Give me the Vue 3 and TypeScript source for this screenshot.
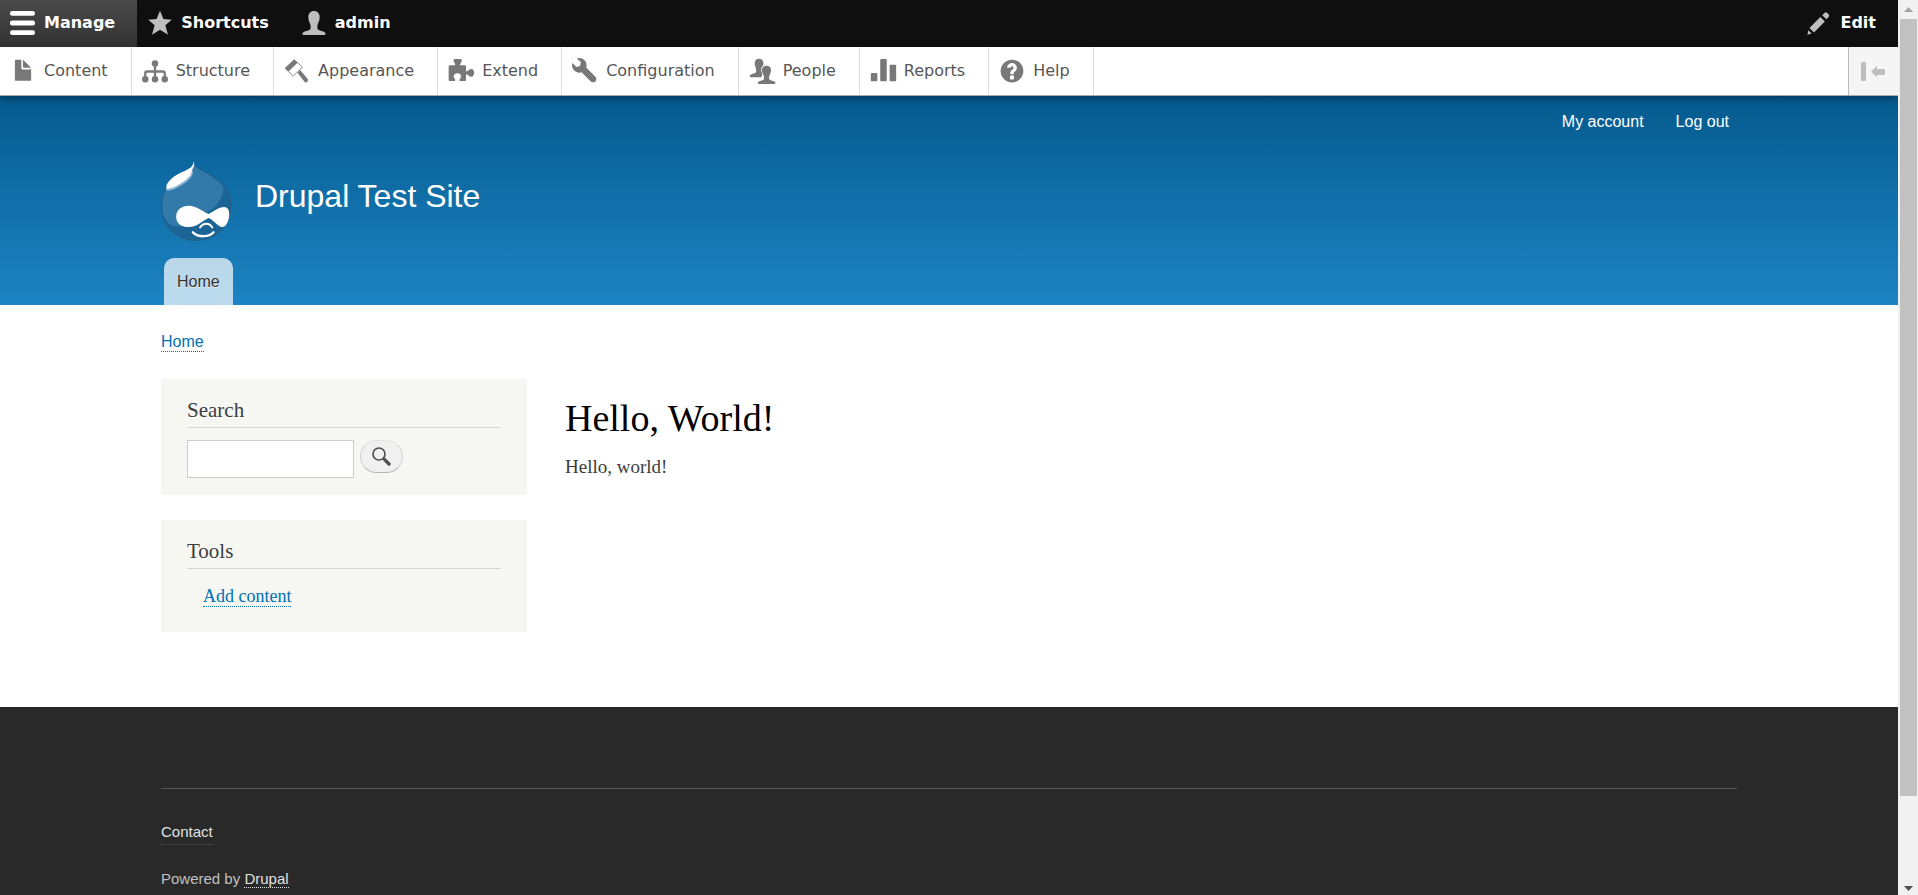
<script setup lang="ts">
import { ref } from 'vue'

interface MenuItem {
  label: string
  icon: string
}

const menu: MenuItem[] = [
  { label: 'Content', icon: 'file' },
  { label: 'Structure', icon: 'chart' },
  { label: 'Appearance', icon: 'brush' },
  { label: 'Extend', icon: 'puzzle' },
  { label: 'Configuration', icon: 'wrench' },
  { label: 'People', icon: 'people' },
  { label: 'Reports', icon: 'bars' },
  { label: 'Help', icon: 'help' },
]

const trayOpen = ref(true)
const query = ref('')
</script>

<template>
  <div class="window">
    <div class="page">
      <nav class="bar" aria-label="Administration toolbar">
        <button type="button" class="tab active" @click="trayOpen = !trayOpen">
          <svg class="icon" viewBox="0 0 16 16" aria-hidden="true">
            <rect y=".6" width="15.4" height="3" rx="1.4" />
            <rect y="6.5" width="15.4" height="3" rx="1.4" />
            <rect y="12.4" width="15.4" height="3" rx="1.4" />
          </svg>
          Manage
        </button>
        <button type="button" class="tab">
          <svg class="icon" viewBox="0 0 16 16" aria-hidden="true">
            <path d="M8 .5 10.1 5.5 15.2 6 11.3 9.4 12.9 15.3 8 12.2 3.1 15.3 4.7 9.4.8 6 5.9 5.5Z" />
          </svg>
          Shortcuts
        </button>
        <button type="button" class="tab">
          <svg class="icon" viewBox="0 0 16 16" aria-hidden="true">
            <path d="M8 .6C10.3.6 11.5 2.2 11.5 4.4 11.5 6.7 10.5 7.8 10.2 9.1 9.9 10.6 10 11.8 10.8 12.3 12.2 13 14.7 12.9 15.1 14.6Q15.1 15.4 14.4 15.4H1.6Q.9 15.4.9 14.6C1.3 12.9 3.8 13 5.2 12.3 6 11.8 6.1 10.6 5.8 9.1 5.5 7.8 4.5 6.7 4.5 4.4 4.5 2.2 5.7.6 8 .6Z" />
          </svg>
          admin
        </button>
        <button type="button" class="tab edit">
          <svg class="icon" viewBox="0 0 16 16" aria-hidden="true">
            <path d="M10 3.2 11.5 1.7Q12.3 1 13.1 1.8L14 2.8Q14.6 3.6 13.9 4.3L12.5 5.7ZM8.8 4.3 11.6 7.1 4.9 13.9 2.1 11.1ZM1.4 12.4 3.5 14.5.9 15.3Z" />
          </svg>
          Edit
        </button>
      </nav>

      <nav v-show="trayOpen" class="tray" aria-label="Administration menu">
        <ul class="menu">
          <li v-for="item in menu" :key="item.label">
            <a href="#">
              <svg class="icon" viewBox="0 0 16 16" aria-hidden="true">
                <path
                  v-if="item.icon === 'file'"
                  d="M12.502 7h-5c-.276 0-.502-.225-.502-.5v-5c0-.275-.225-.5-.5-.5h-3c-.275 0-.5.225-.5.5v12.029c0 .275.225.5.5.5h9c.275 0 .5-.225.5-.5v-6.529c0-.275-.223-.5-.498-.5zM8.502 6h4c.275 0 .34-.159.146-.354l-4.293-4.292c-.195-.195-.353-.129-.353.146v4c0 .275.225.5.5.5z"
                />
                <g v-else-if="item.icon === 'chart'">
                  <circle cx="8" cy="3.4" r="2" />
                  <circle cx="2" cy="13.1" r="2" />
                  <circle cx="8" cy="13.1" r="2" />
                  <circle cx="14" cy="13.1" r="2" />
                  <path class="line" d="M8 3V13M2 13V9.4Q2 8.3 3.1 8.3H12.9Q14 8.3 14 9.4V13" />
                </g>
                <g v-else-if="item.icon === 'brush'">
                  <path d="M6.3.7 8.5 2.8 2.6 8.5.4 6.3Z" />
                  <path class="thin" d="M8.3 2.8 11.3 5.7 5.7 11.1 2.7 8.3" />
                  <path d="M8.3 9 9.9 7.4 14.5 12.7Q15.2 13.7 14.4 14.6 13.5 15.4 12.6 14.6Z" />
                </g>
                <path
                  v-else-if="item.icon === 'puzzle'"
                  d="M.4 5.4Q.4 4.5 1.4 4.5H4.4C4.7 3.4 3.4 2.5 3.4 1.5 3.4.8 4 .6 4.7.6H7.3C8 .6 8.5.8 8.5 1.5 8.5 2.5 7.2 3.4 7.5 4.5H10.3Q11.1 4.5 11.1 5.4V8.2C12.3 8.5 12.7 6.7 14.2 6.7 15.5 6.7 16.1 7.8 16.1 9 16.1 10.2 15.5 11.5 14.2 11.5 12.7 11.5 12.3 9.7 11.1 10V13.5Q11.1 14.2 10.3 14.2H7.1C6.7 13.1 8 12.6 8 11.3 8 10 6.9 9.4 5.8 9.4 4.7 9.4 3.5 10 3.5 11.3 3.5 12.6 4.8 13.1 4.4 14.2H1.3Q.4 14.2.4 13.5Z"
                />
                <path
                  v-else-if="item.icon === 'wrench'"
                  d="M14.416 11.586l-.01-.008v-.001l-5.656-5.656c.15-.449.252-.921.252-1.421 0-2.485-2.016-4.5-4.502-4.5-.505 0-.981.102-1.434.255l2.431 2.431-.588 2.196-2.196.588-2.445-2.445c-.162.464-.268.956-.268 1.475 0 2.486 2.014 4.5 4.5 4.5.5 0 .972-.102 1.421-.251l5.667 5.665c.781.781 2.047.781 2.828 0s.781-2.047 0-2.828z"
                />
                <g v-else-if="item.icon === 'people'">
                  <path d="M6.2.5C7.9.5 8.9 1.7 8.9 3.4 8.9 4 8.8 4.4 8.6 4.8 7.4 5.6 7.2 7.6 8 9.3 8.3 10.4 8.2 11 7.4 11.9H1.1Q.4 11.9.4 11.2C.7 9.9 2.9 9.9 3.8 9.3 4.8 8.5 4.5 7.2 4.2 6.1 3.8 5.2 3.5 4.5 3.5 3.4 3.5 1.7 4.5.5 6.2.5Z" />
                  <path d="M10.8 4.7C12.6 4.7 13.6 5.9 13.6 7.6 13.6 9.1 12.8 10 12.5 11.1 12.2 12.4 12.3 13.2 13 13.6 14 14.2 16 14.1 16.3 15.3Q16.3 16 15.7 16H6Q5.4 16 5.4 15.3C5.8 14.1 7.7 14.2 8.6 13.6 9.3 13.2 9.4 12.4 9.1 11.1 8.8 10 8 9.1 8 7.6 8 5.9 9 4.7 10.8 4.7Z" />
                </g>
                <g v-else-if="item.icon === 'bars'">
                  <rect x=".5" y="9.3" width="4" height="5" rx=".6" />
                  <rect x="6.3" y=".6" width="4" height="13.7" rx=".6" />
                  <rect x="12.1" y="4.2" width="4" height="10.1" rx=".6" />
                </g>
                <path
                  v-else
                  d="M8.002 1c-3.868 0-7.002 3.134-7.002 7s3.134 7 7.002 7c3.865 0 7-3.134 7-7s-3.135-7-7-7zm3 5c0 .551-.16 1.085-.477 1.586l-.158.22c-.07.093-.189.241-.361.393-.168.148-.35.299-.545.447l-.203.189-.141.129-.096.17-.021.235v.63h-2.001v-.704c.026-.396.078-.73.204-.999.125-.269.271-.498.439-.688l.225-.21-.01-.015.176-.14.137-.128c.186-.139.357-.277.516-.417l.148-.18c.098-.152.168-.323.168-.518 0-.552-.447-1-1-1s-1.002.448-1.002 1h-2c0-1.657 1.343-3 3.002-3 1.656 0 3 1.343 3 3zm-1.75 6.619c0 .344-.281.625-.625.625h-1.25c-.345 0-.626-.281-.626-.625v-1.238c0-.344.281-.625.626-.625h1.25c.344 0 .625.281.625.625v1.238z"
                />
              </svg>
              {{ item.label }}
            </a>
          </li>
        </ul>
        <button type="button" class="orient" aria-label="Vertical orientation">
          <svg viewBox="0 0 24 20" aria-hidden="true">
            <rect width="5" height="19" rx="1" />
            <path d="M10 9.5 16 4V7H23Q24 7 24 8V12Q24 13 23 13H16V15.5Z" />
          </svg>
        </button>
      </nav>

      <header class="header">
        <div class="container">
          <nav class="account" aria-label="User account menu">
            <a href="#">My account</a>
            <a href="#">Log out</a>
          </nav>
          <div class="branding">
            <a href="#" class="logo" aria-label="Home page">
              <svg viewBox="2 0 210 240" aria-hidden="true">
                <path fill="#1b6496" stroke="#2b5d82" stroke-width="3" d="M100 3C100 14 108 20 122 28 165 50 210 72 210 134 210 195 166 238 106 238 46 238 2 195 2 135 2 88 30 62 62 45 90 30 98 18 100 3Z" />
                <path fill="#327aa9" d="M100 5C102 16 108 22 122 29 150 43 172 58 187 76 190 112 164 142 137 154L90 196H40C18 190 4 165 4 135 4 88 30 63 62 46 90 31 98 20 100 5Z" />
                <path fill="#8db6d2" d="M95 26C100 44 86 56 68 69 48 82 28 90 20 89 12 88 15 82 20 78Z" />
                <path fill="#fff" d="M99 0C98 18 85 24 62 34 36 46 12 68 17 82 26 86 48 76 66 63 88 48 92 40 93 28 98 20 102 12 99 0Z" />
                <path fill="#fff" d="M84 134C107 134 125 151 144 159 160 150 174 138 190 138 202 138 206 150 205 164 203 184 194 198 185 198 172 198 158 177 144 171 126 177 112 198 82 198 60 198 46 185 46 167 46 147 62 134 84 134Z" />
                <path fill="none" stroke="#fff" stroke-width="6" stroke-linecap="round" d="M118 199C127 185 146 185 154 199" />
                <path fill="none" stroke="#fff" stroke-width="7" stroke-linecap="round" d="M96 214C112 230 146 229 158 214" />
              </svg>
            </a>
            <a href="#" class="name">Drupal Test Site</a>
          </div>
          <nav class="tabs" aria-label="Main navigation">
            <a href="#">Home</a>
          </nav>
        </div>
      </header>

      <div class="container">
        <nav class="crumbs" aria-label="Breadcrumb">
          <a href="#" class="dotted">Home</a>
        </nav>
        <div class="columns">
          <aside class="sidebar">
            <section class="block">
              <h2>Search</h2>
              <form class="search" role="search" @submit.prevent>
                <input v-model="query" type="search" aria-label="Search" />
                <button type="submit" aria-label="Search">
                  <svg viewBox="0 0 19 19" aria-hidden="true">
                    <circle cx="7" cy="7" r="6" />
                    <path class="neck" d="M11.2 11.2 13 13" />
                    <path class="handle" d="M12.6 12.6 17 17" />
                  </svg>
                </button>
              </form>
            </section>
            <section class="block">
              <h2>Tools</h2>
              <ul class="links">
                <li><a href="#" class="dotted">Add content</a></li>
              </ul>
            </section>
          </aside>
          <main class="content">
            <h1>Hello, World!</h1>
            <p>Hello, world!</p>
          </main>
        </div>
      </div>

      <footer class="footer">
        <div class="container">
          <div class="footer-inner">
            <nav aria-label="Footer menu"><a href="#" class="contact">Contact</a></nav>
            <p>Powered by <a href="#" class="powered">Drupal</a></p>
          </div>
        </div>
      </footer>
    </div>

    <div class="scrollbar" aria-hidden="true">
      <svg viewBox="0 0 9 5"><path fill="#a3a3a3" d="M0 5 4.5 0 9 5Z" /></svg>
      <div class="track"><div class="thumb"></div></div>
      <svg viewBox="0 0 9 5"><path fill="#505050" d="M0 0H9L4.5 5Z" /></svg>
    </div>
  </div>
</template>

<style>
body {
  margin: 0;
}
</style>

<style scoped>
* {
  box-sizing: border-box;
}
.window {
  display: grid;
  grid-template-columns: minmax(0, 1fr) 20px;
  height: 100vh;
  overflow: hidden;
}
.page {
  display: flex;
  flex-direction: column;
  overflow: hidden;
  background: #fff;
  color: #3b3b3b;
  font: 19px/28px "Liberation Serif", Georgia, serif;
}
a {
  color: inherit;
  text-decoration: none;
}
button {
  margin: 0;
  border: 0;
  cursor: pointer;
}
ul {
  margin: 0;
  padding: 0;
  list-style: none;
}
.icon {
  width: 26px;
  height: 26px;
  margin-right: 8px;
  overflow: visible;
  flex: none;
  fill: currentColor;
}

/* toolbar */
.bar {
  display: flex;
  height: 47px;
  flex: none;
  background: #0f0f0f;
}
.tab {
  display: flex;
  align-items: center;
  padding: 0 22px 2px 10px;
  background: none;
  color: #fff;
  font: bold 16px/20px "DejaVu Sans", Verdana, sans-serif;
}
.tab .icon {
  fill: #bebebe;
}
.tab.active {
  background: linear-gradient(#4a4a4a, #323232);
}
.tab.active .icon {
  fill: #fff;
}
.tab.edit {
  margin-left: auto;
}
.tray {
  position: relative;
  display: flex;
  justify-content: space-between;
  height: 49px;
  flex: none;
  border-bottom: 1px solid #aaa;
  background: #fff;
  box-shadow: 0 3px 7px rgba(0, 0, 0, 0.35);
}
.menu {
  display: flex;
}
.menu li {
  display: flex;
  border-right: 1px solid #ddd;
}
.menu a {
  display: flex;
  align-items: center;
  padding: 0 23px 0 10px;
  color: #565656;
  font: 16px/20px "DejaVu Sans", Verdana, sans-serif;
}
.menu .icon {
  fill: #787878;
}
.line,
.thin {
  fill: none;
  stroke: #787878;
  stroke-width: 1.4;
}
.thin {
  stroke-width: 0.5;
}
.orient {
  width: 50px;
  padding: 2px 0 0 12px;
  border-left: 1px solid #bbb;
  background: #f5f5f5;
  text-align: left;
}
.orient svg {
  display: block;
  width: 24px;
  height: 20px;
  fill: #bebebe;
}

/* site header */
.container {
  width: calc(100% - 40px);
  max-width: 1576px;
  margin: 0 auto;
}
.header {
  flex: none;
  background: linear-gradient(#055a8e, #1d84c3);
  color: #fff;
  font: 16px/24px "Liberation Sans", Arial, sans-serif;
}
.account {
  display: flex;
  justify-content: flex-end;
  gap: 32px;
  padding: 14px 8px 0 0;
}
.branding {
  display: flex;
  gap: 23px;
  margin-top: 27px;
}
.logo svg {
  display: block;
  width: 71px;
  height: 80px;
}
.name {
  padding-top: 15px;
  font-size: 32px;
  line-height: 40px;
}
.tabs {
  display: flex;
  margin: 17px 0 0 3px;
}
.tabs a {
  padding: 12px 13px 11px;
  border-radius: 10px 10px 0 0;
  background: rgba(255, 255, 255, 0.7);
  color: #333;
  text-shadow: 0 1px 0 #eee;
}

/* main area */
.dotted {
  border-bottom: 1px dotted #0071b3;
  color: #0071b3;
}
.crumbs {
  display: flex;
  padding-top: 28px;
  font: 16px/18px "Liberation Sans", Arial, sans-serif;
}
.columns {
  display: flex;
  gap: 38px;
  margin-top: 27px;
}
.sidebar {
  display: flex;
  flex-direction: column;
  gap: 25px;
  width: 366px;
  flex: none;
}
.block {
  padding: 17px 26px;
  background: #f6f6f2;
}
.block h2 {
  margin: 0;
  padding-bottom: 3px;
  border-bottom: 1px solid #d6d6d6;
  font-size: 21px;
  font-weight: normal;
  line-height: 28px;
  text-shadow: 0 1px 0 #fff;
}
.search {
  display: flex;
  align-items: flex-start;
  gap: 6px;
  padding-top: 12px;
}
.search input {
  width: 167px;
  height: 38px;
  margin: 0;
  padding: 4px;
  border: 1px solid #ccc;
  border-radius: 0;
  outline: 0;
  background: #fff;
  font: 16px/24px "Liberation Sans", Arial, sans-serif;
  appearance: none;
}
.search button {
  display: flex;
  justify-content: center;
  width: 43px;
  height: 33px;
  padding: 6px 0 0;
  border: 1px solid #d0d0d0;
  border-top-color: #e4e4e4;
  border-bottom-color: #b4b4b4;
  border-radius: 17px;
  background: #f0f0f0;
}
.search svg {
  width: 19px;
  height: 19px;
  fill: none;
  stroke: #505050;
  stroke-width: 1.7;
}
.search .handle {
  stroke-width: 3.4;
  stroke-linecap: round;
}
.links {
  display: flex;
  padding: 17px 16px 8px;
  font-size: 18px;
  line-height: 20px;
}
.links a {
  display: block;
}
.content h1 {
  margin: 17px 0 0;
  color: #000;
  font-size: 38px;
  font-weight: normal;
  line-height: 44px;
}
.content p {
  margin: 13px 0 0;
}

/* footer */
.footer {
  flex: 1 0 auto;
  margin-top: 75px;
  padding-top: 81px;
  background: #292929;
  color: #c0c0c0;
  font: 15px/20px "Liberation Sans", Arial, sans-serif;
}
.footer-inner {
  padding-top: 33px;
  border-top: 1px solid #555;
}
.footer nav {
  display: flex;
}
.footer p {
  margin: 24px 0 0;
}
.footer a {
  color: #e0e0e0;
}
.contact {
  padding-bottom: 2px;
  border-bottom: 1px dotted #555;
}
.powered {
  border-bottom: 1px dotted #e0e0e0;
}

/* scrollbar */
.scrollbar {
  display: flex;
  flex-direction: column;
  align-items: center;
  padding: 7px 0 4px;
  background: #f1f1f1;
}
.scrollbar svg {
  width: 9px;
  height: 5px;
}
.track {
  flex: 1;
  width: 17px;
  margin: 7px 0;
}
.thumb {
  height: 90.4%;
  background: #c1c1c1;
}
</style>
